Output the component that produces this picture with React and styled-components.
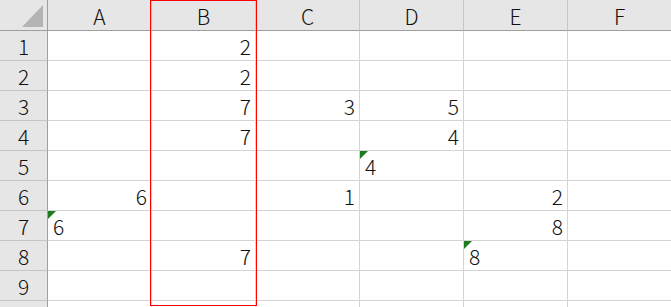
import React from "react";
import styled, { createGlobalStyle } from "styled-components";

const GlobalStyle = createGlobalStyle`
  html, body {
    margin: 0;
    padding: 0;
    background: #ffffff;
    overflow: hidden;
  }
  * {
    box-sizing: border-box;
  }
`;

const columns = ["A", "B", "C", "D", "E", "F"];

// cell values: [row][col] -> { v, text }
const data = {
  1: { B: { v: "2" } },
  2: { B: { v: "2" } },
  3: { B: { v: "7" }, C: { v: "3" }, D: { v: "5" } },
  4: { B: { v: "7" }, D: { v: "4" } },
  5: { D: { v: "4", text: true } },
  6: { A: { v: "6" }, C: { v: "1" }, E: { v: "2" } },
  7: { A: { v: "6", text: true }, E: { v: "8" } },
  8: { B: { v: "7" }, E: { v: "8", text: true } },
  9: {},
  10: {},
};

const Sheet = styled.div`
  position: relative;
  display: grid;
  grid-template-columns: 48px repeat(6, 104px);
  grid-template-rows: 31px;
  grid-auto-rows: 30px;
  font-family: "Noto Sans CJK SC", "Noto Sans", sans-serif;
  font-weight: 300;
  font-size: 21px;
  color: #111;
`;

const Corner = styled.div`
  background: #e6e6e6;
  border-right: 1px solid #9e9e9e;
  border-bottom: 1px solid #9e9e9e;
  display: flex;
  align-items: flex-end;
  justify-content: flex-end;
  padding: 0 4px 3px 0;
`;

const CornerMark = styled.div`
  width: 21px;
  height: 22px;
  background: #b4b4b4;
  clip-path: polygon(100% 0, 100% 100%, 0 100%);
`;

const ColHead = styled.div`
  background: #e6e6e6;
  border-right: 1px solid #c6c6c6;
  border-bottom: 1px solid #9e9e9e;
  display: flex;
  align-items: center;
  justify-content: center;
  line-height: 1;
  padding-top: 2px;
`;

const RowHead = styled.div`
  background: #e6e6e6;
  border-right: 1px solid #9e9e9e;
  border-bottom: 1px solid #c6c6c6;
  display: flex;
  align-items: flex-end;
  justify-content: center;
  line-height: 21px;
  padding-bottom: 3px;
`;

const Cell = styled.div`
  position: relative;
  background: #fff;
  border-right: 1px solid #d4d4d4;
  border-bottom: 1px solid #d4d4d4;
  display: flex;
  align-items: flex-end;
  justify-content: ${(p) => (p.$left ? "flex-start" : "flex-end")};
  padding: 0 4px 3px 5px;
  line-height: 21px;
`;

const ErrorMark = styled.span`
  position: absolute;
  top: 0;
  left: 0;
  width: 8px;
  height: 8px;
  background: #1e7b1e;
  clip-path: polygon(0 0, 100% 0, 0 100%);
`;

const Selection = styled.div`
  position: absolute;
  left: 150px;
  top: 0;
  width: 107px;
  height: 306px;
  border: 1px solid #ff0000;
  pointer-events: none;
`;

export default function App() {
  const rows = Object.keys(data).map(Number);
  return (
    <>
      <GlobalStyle />
      <Sheet>
        <Corner>
          <CornerMark />
        </Corner>
        {columns.map((c) => (
          <ColHead key={c}>{c}</ColHead>
        ))}
        {rows.map((r) => (
          <React.Fragment key={r}>
            {/* row 10 sits below the frame, only its top edge shows */}
            <RowHead>{r < 10 ? r : ""}</RowHead>
            {columns.map((c) => {
              const cell = data[r][c];
              return (
                <Cell key={c} $left={cell && cell.text}>
                  {cell && cell.text && <ErrorMark />}
                  {cell ? cell.v : ""}
                </Cell>
              );
            })}
          </React.Fragment>
        ))}
        <Selection />
      </Sheet>
    </>
  );
}
